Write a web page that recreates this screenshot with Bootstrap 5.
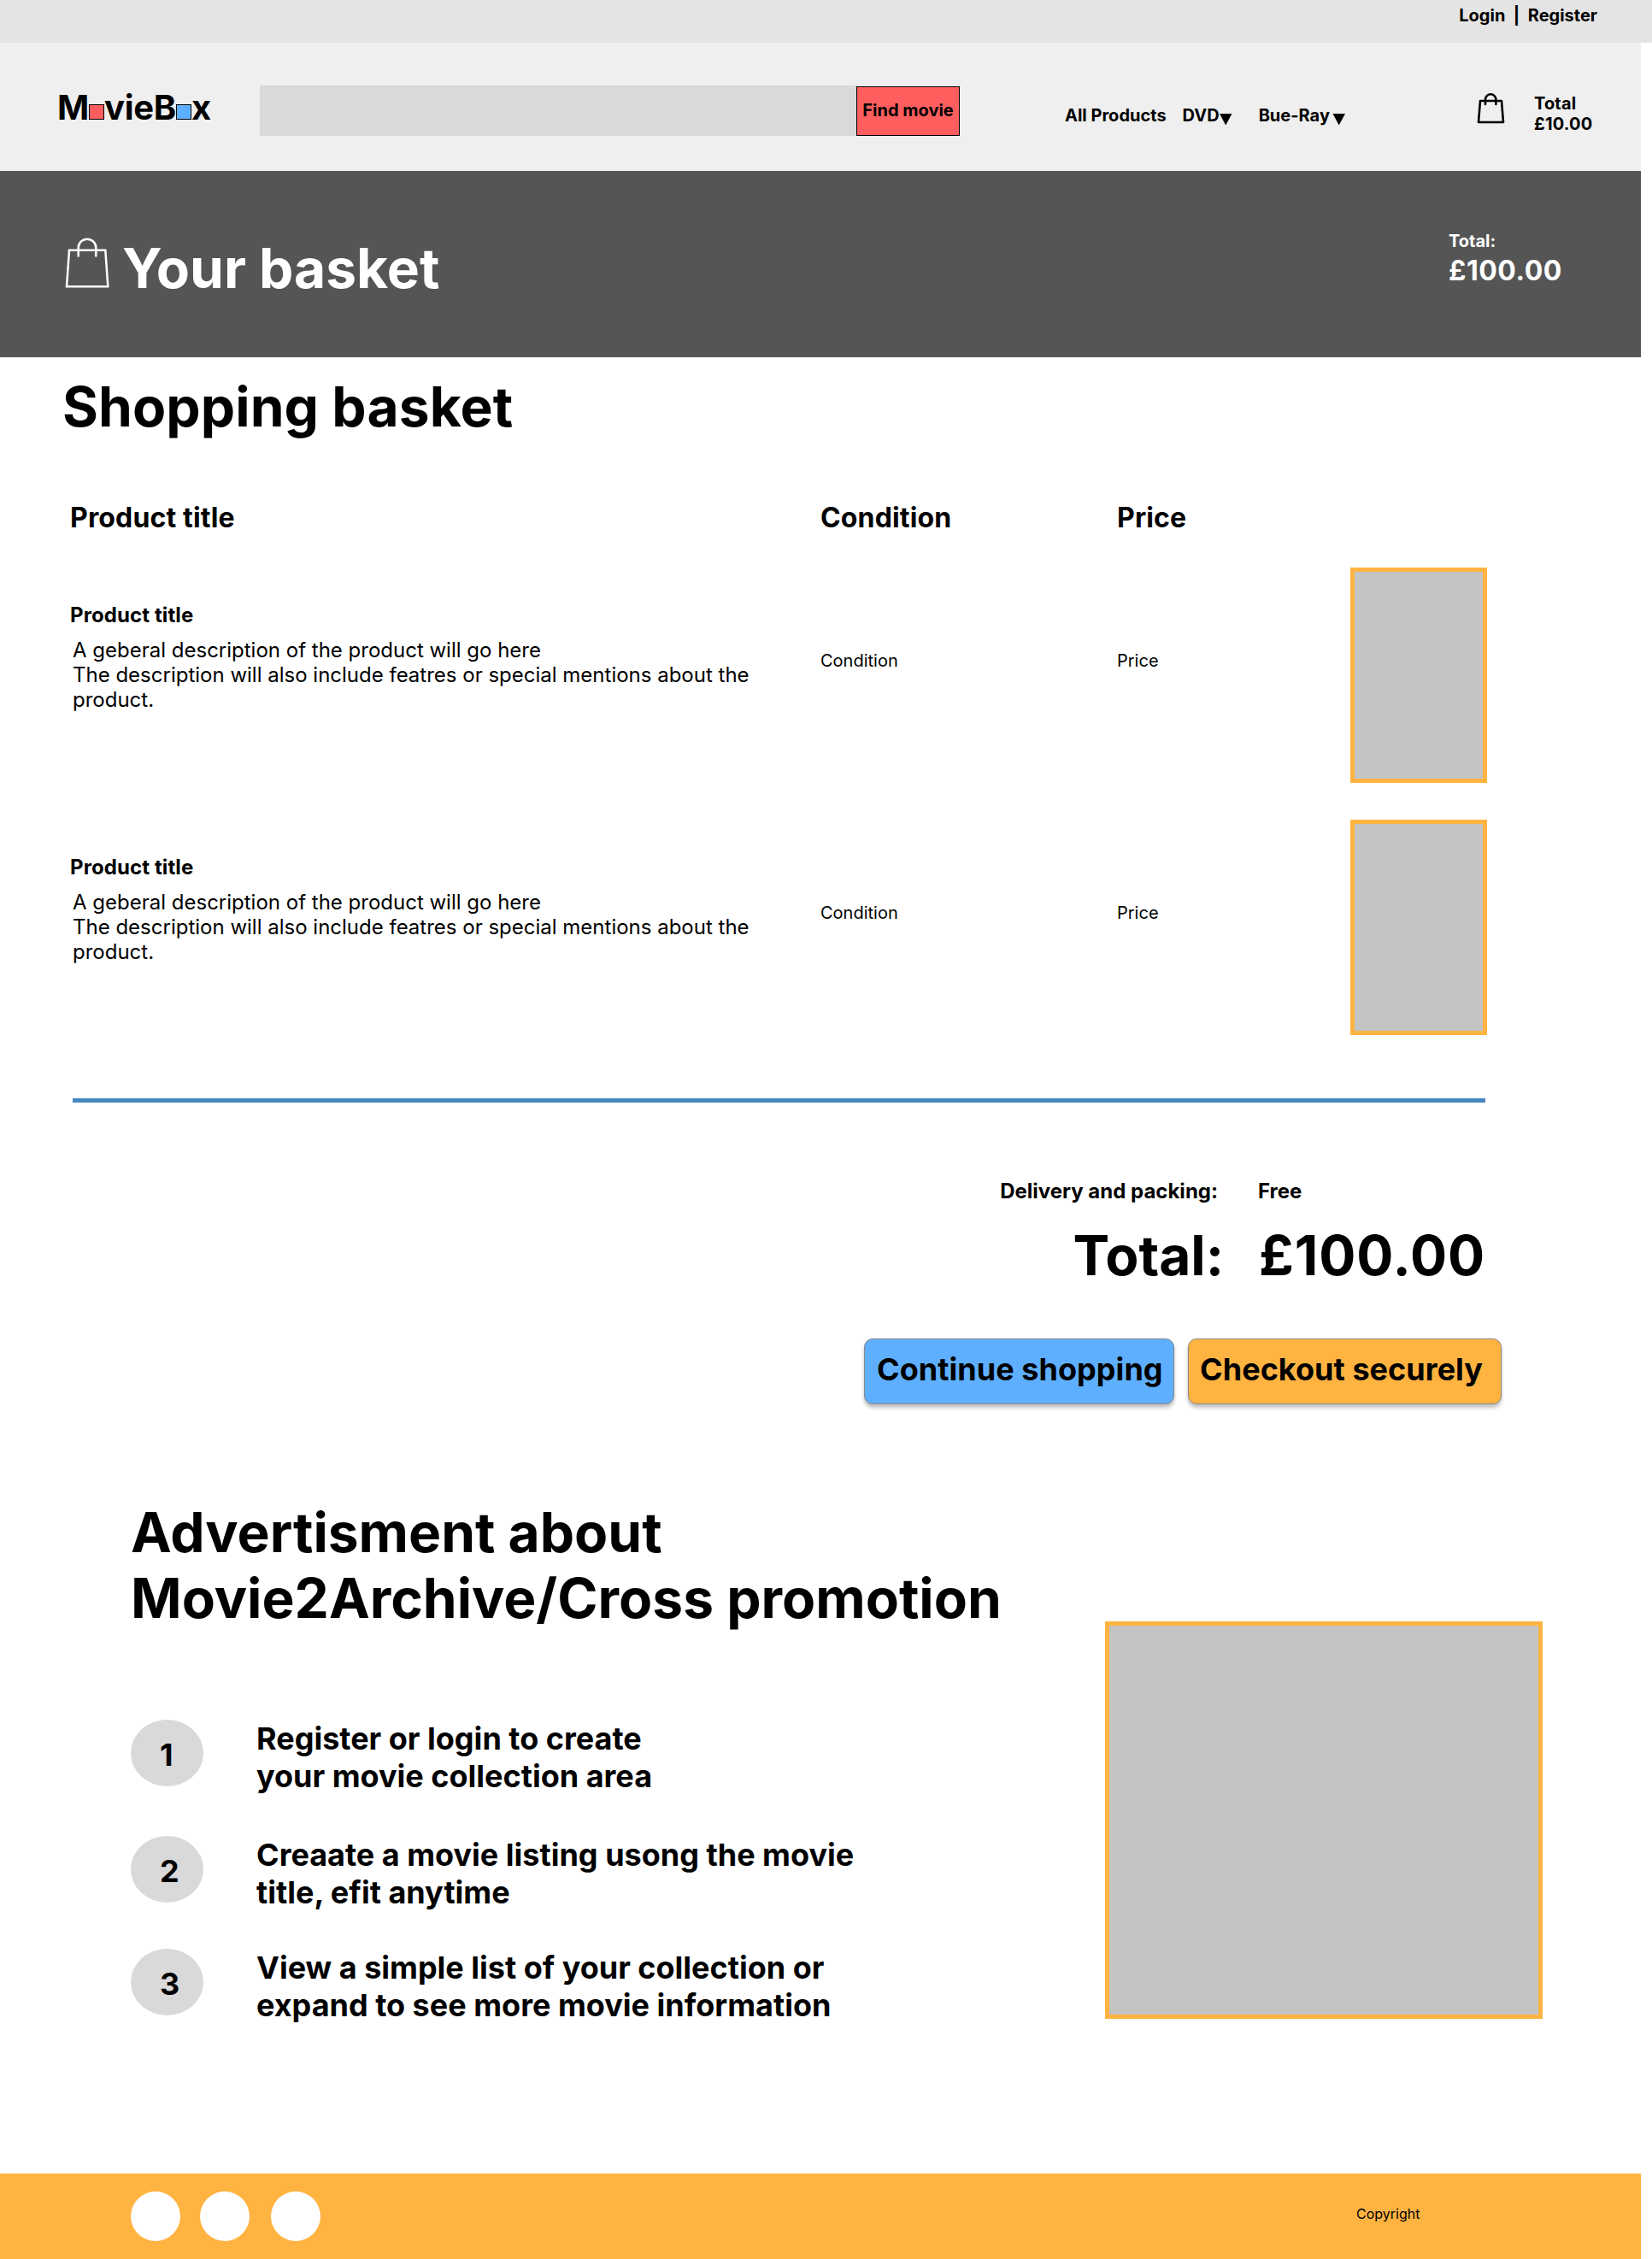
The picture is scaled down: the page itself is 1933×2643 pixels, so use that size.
<!DOCTYPE html>
<html lang="en">
<head>
<meta charset="utf-8">
<meta name="viewport" content="width=device-width, initial-scale=1">
<title>MovieBox - Your basket</title>
<link href="https://cdn.jsdelivr.net/npm/bootstrap@5.3.0/dist/css/bootstrap.min.css" rel="stylesheet">
<style>
body{font-family:Inter,"Liberation Sans",sans-serif;color:#000;background:#fff;font-size:20px;line-height:1.21;overflow-x:hidden}
h1,h2,h3,p{margin:0;line-height:1.21;font-weight:700}
a{color:inherit;text-decoration:none}
.page{width:1920px}
.fs-hero{font-size:64px;white-space:nowrap}
.fs-36{font-size:36px}.fs-32{font-size:32px}.fs-24{font-size:24px}.fs-20{font-size:20px}
.topbar{height:50px;background:#e4e4e4;padding:6px 64px 0 0;white-space:pre}
.site-head{height:150px;background:#efefef}
.logo{font-size:40px;margin:52px 0 0 67px;width:237px;white-space:nowrap;letter-spacing:-.3px}
.sq{display:inline-block;width:18px;height:18px;border:1px solid #000}
.sq-red{background:#ff5e5e}.sq-blue{background:#5eafff}
.search{width:819px;margin-top:50px;height:59px}
.search input{background:#d9d9d9;border:0;border-radius:0;height:59px}
.search .btn{width:121px;height:58px;margin-top:1px;border:1px solid #000;border-radius:0;background:#ff5e5e;font-size:20px;font-weight:700;padding:0 0 3px;white-space:nowrap;color:#000}
.main-nav{margin:73px 0 0 123px;width:482px;white-space:nowrap}
.main-nav svg{display:block}
.nav-dvd{margin-left:19px}
.nav-blu{margin-left:31px}
.mini-bag{margin-top:58px}
.mini-total{margin:59px 0 0 33px;letter-spacing:.15px}
.banner{height:218px;background:#555;color:#fff}
.banner-bag{margin:77px 0 0 76px}
.banner h1{margin:75px 0 0 14px}
.banner-total{width:225px;margin-top:70px}
.banner-total .fs-32{margin-top:4px;letter-spacing:.5px}
.basket{padding:31px 180px 0 73px;height:1275px}
.basket h2{margin-top:-12px;letter-spacing:.1px}
.product-grid{display:grid;grid-template-columns:878px 347px 273px 160px;margin-left:9px}
.list-head{margin-top:73px;margin-bottom:38px;letter-spacing:.15px}
.item-row{height:252px;margin-bottom:43px}
.item-title{padding-top:41px}
.item-title h3{letter-spacing:.1px}
.item-cell{padding-top:97px}
.desc{font-weight:400;margin:12px 0 0 3px;width:810px}
.cover{background:#c4c4c4;border:5px solid #ffb341}
.rule{height:5px;background:#4686c1;margin:74px 2px 0 12px}
.sums{display:grid;grid-template-columns:1fr 268px}
.delivery{margin-top:89px}
.delivery div:first-child{padding-right:47px}
.grand{margin-top:22px}
.grand div:first-child{padding-right:40px}
.grand div:last-child{padding-left:1px;letter-spacing:.9px}
.actions{gap:16px;margin:58px -17px 0 0}
.actions .btn{height:77px;border:1px solid #888;border-radius:10px;font-size:36px;font-weight:700;color:#000;padding:0 0 4px 14px;text-align:left;box-shadow:0 4px 4px rgba(0,0,0,.25);white-space:nowrap;letter-spacing:.05px}
.actions .btn-cont{width:363px;background:#5eafff}
.actions .btn-secure{width:367px;background:#ffb341;padding-left:13px}
.advert{height:850px;padding-left:153px}
.advert-copy{padding-top:61px}
.steps{margin-top:103px}
.step{height:136px;line-height:44px}
.step + .step{height:132px}
.step-no{width:85px;height:78px;border-radius:50%;background:#d9d9d9;padding:4px 0 0 34px}
.step-text{margin-left:62px}
.promo{width:512px;height:465px;margin:204px 115px 0 0}
.foot{height:100px;background:#ffb341;padding:21px 0 0 153px}
.dot{width:58px;height:58px;border-radius:50%;background:#fff}
.dot-one{margin-right:23px}
.dot-two{margin-right:25px}
.copy-note{font-size:16px;margin:17px 0 0 1212px}
</style>
<script src="https://cdn.jsdelivr.net/npm/bootstrap@5.3.0/dist/js/bootstrap.bundle.min.js"></script>
</head>
<body>
<div class="topbar fw-bold d-flex justify-content-end"><a href="#">Login</a>  |  <a href="#">Register</a></div>
<div class="page">
<header class="site-head d-flex align-items-start fw-bold">
  <a class="logo" href="#">M<span class="sq sq-red"></span>vieB<span class="sq sq-blue"></span>x</a>
  <form class="search d-flex"><input class="form-control" type="text" aria-label="Search"><button class="btn flex-shrink-0" type="button">Find movie</button></form>
  <nav class="main-nav d-flex">
    <a href="#">All Products</a>
    <a class="d-flex nav-dvd" href="#">DVD<svg width="15" height="24"><path d="M0 10H14.500L7.200 23.500Z"/></svg></a>
    <a class="d-flex nav-blu" href="#">Bue-Ray<svg width="19" height="24"><path d="M3.500 10H18L10.700 23.500Z"/></svg></a>
  </nav>
  <svg class="mini-bag" width="34" height="38" viewBox="0 0 34 38" fill="none" stroke="#000" stroke-width="2.6" stroke-linecap="round" stroke-linejoin="round"><path d="M4 10H29L31 35H2Z"/><path d="M10 14V8.500A6.200 6.200 0 0 1 22.400 8.500V14"/></svg>
  <p class="mini-total">Total<br>£10.00</p>
</header>
<section class="banner d-flex align-items-start">
  <svg class="banner-bag" width="53" height="61" viewBox="0 0 53 61" fill="none" stroke="#fff" stroke-width="2.5" stroke-linecap="round"><path d="M5 15.700H47.300L50.300 58.200H2Z"/><path d="M15.700 22.500V13A10.300 10.300 0 0 1 36.300 13V22.500"/></svg>
  <h1 class="fs-hero">Your basket</h1>
  <div class="ms-auto banner-total"><p class="fs-20">Total:</p><p class="fs-32">£100.00</p></div>
</section>
<main>
<section class="basket">
  <h2 class="fs-hero">Shopping basket</h2>
  <div class="product-grid list-head fs-32 fw-bold"><div>Product title</div><div>Condition</div><div>Price</div></div>
  <div class="product-grid item-row">
    <div class="item-title"><h3 class="fs-24">Product title</h3><p class="desc fs-24">A geberal description of the product will go here<br>The description will also include featres or special mentions about the product.</p></div>
    <div class="item-cell">Condition</div><div class="item-cell">Price</div><div class="cover"></div>
  </div>
  <div class="product-grid item-row">
    <div class="item-title"><h3 class="fs-24">Product title</h3><p class="desc fs-24">A geberal description of the product will go here<br>The description will also include featres or special mentions about the product.</p></div>
    <div class="item-cell">Condition</div><div class="item-cell">Price</div><div class="cover"></div>
  </div>
  <div class="rule"></div>
  <div class="sums delivery fs-24 fw-bold"><div class="text-end">Delivery and packing:</div><div>Free</div></div>
  <div class="sums grand fs-hero fw-bold"><div class="text-end">Total:</div><div>£100.00</div></div>
  <div class="actions d-flex justify-content-end"><button class="btn btn-cont" type="button">Continue shopping</button><button class="btn btn-secure" type="button">Checkout securely</button></div>
</section>
<section class="advert d-flex justify-content-between align-items-start">
  <div class="advert-copy">
    <h2 class="fs-hero">Advertisment about<br>Movie2Archive/Cross promotion</h2>
    <div class="steps fs-36 fw-bold">
      <div class="step d-flex"><div class="step-no d-flex align-items-center">1</div><div class="step-text">Register or login to create<br>your movie collection area</div></div>
      <div class="step d-flex"><div class="step-no d-flex align-items-center">2</div><div class="step-text">Creaate a movie listing usong the movie<br>title, efit anytime</div></div>
      <div class="step d-flex"><div class="step-no d-flex align-items-center">3</div><div class="step-text">View a simple list of your collection or<br>expand to see more movie information</div></div>
    </div>
  </div>
  <div class="cover promo"></div>
</section>
</main>
<footer class="foot d-flex align-items-start"><a href="#" class="dot dot-one"></a><a href="#" class="dot dot-two"></a><a href="#" class="dot"></a><span class="copy-note">Copyright</span></footer>
</div>
</body>
</html>
